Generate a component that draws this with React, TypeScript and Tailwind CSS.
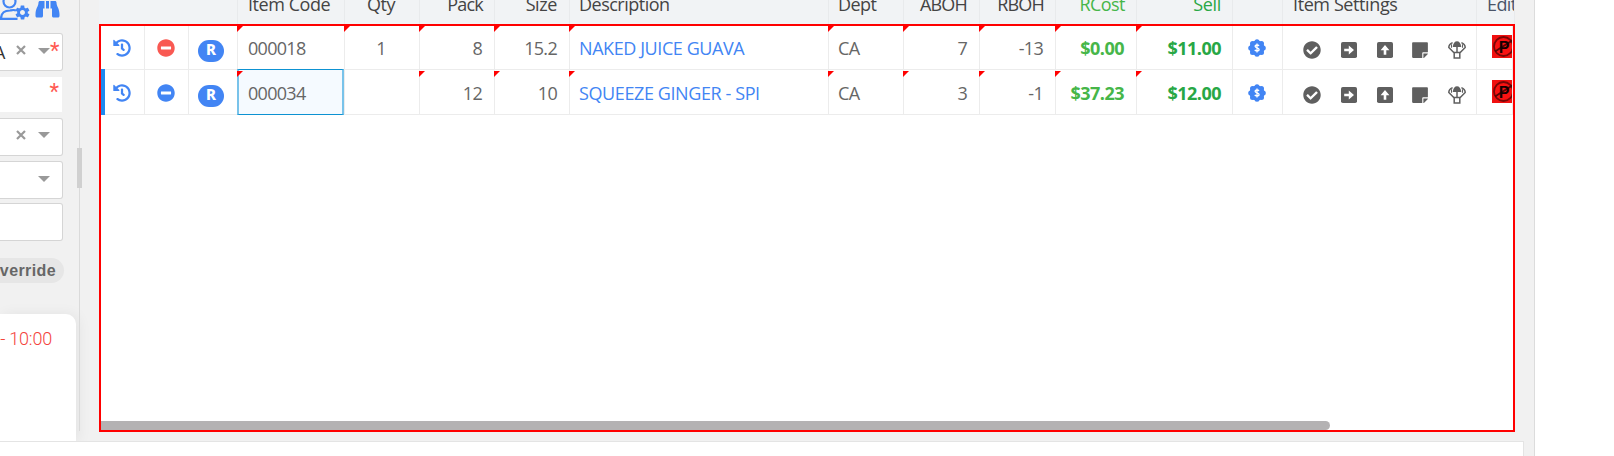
import React from "react";
import { FaHistory, FaMinusCircle, FaCheckCircle, FaStickyNote, FaBinoculars } from "react-icons/fa";
import { IoMdSettings } from "react-icons/io";

const GRID =
  "grid grid-cols-[44px_44px_49px_107px_75px_75px_75px_259px_75px_76px_76px_81px_96px_50px_194px_1fr]";

function UserGear() {
  return (
    <div className="relative h-7 w-[31px] shrink-0 text-[#4285f4]">
      <svg viewBox="0 0 31 28" className="h-7 w-[31px]" fill="none" stroke="currentColor" strokeWidth="2.2">
        <circle cx="9.5" cy="9.5" r="6" />
        <path d="M16 18.5c-2-1-3.500-.5-6 0-5 .2-9 1.500-9 8.300h16.500" />
      </svg>
      <IoMdSettings className="absolute top-[12px] left-[14px] size-[17px]" />
    </div>
  );
}

function DollarBadge() {
  return (
    <svg viewBox="0 0 18 18" className="size-[18px]">
      <g fill="#4285f4">
        <circle cx="9" cy="9" r="7.600" />
        <circle cx="9" cy="2.700" r="2.500" />
        <circle cx="13.500" cy="4.500" r="2.500" />
        <circle cx="15.300" cy="9" r="2.500" />
        <circle cx="13.500" cy="13.500" r="2.500" />
        <circle cx="9" cy="15.300" r="2.500" />
        <circle cx="4.500" cy="13.500" r="2.500" />
        <circle cx="2.700" cy="9" r="2.500" />
        <circle cx="4.500" cy="4.500" r="2.500" />
      </g>
      <path
        d="M11 6.900C10.600 6.300 10 6 9 6c-1.200 0-1.900.5-1.900 1.300 0 2.100 4 1.200 4 3.300 0 .9-.8 1.400-2.100 1.400-1.100 0-1.800-.3-2.200-1.100M9 4.600v8.800"
        fill="none"
        stroke="#fff"
        strokeWidth="1.300"
      />
    </svg>
  );
}

function ArrowSquare({ up = false }: { up?: boolean }) {
  return (
    <svg viewBox="0 0 16 16" className={up ? "size-4 -rotate-90" : "size-4"}>
      <rect width="16" height="16" rx="1.800" fill="currentColor" />
      <path d="M3.200 6.700h4.600V3.600L13 8l-5.200 4.400V9.300H3.200z" fill="#fff" />
    </svg>
  );
}

function Parachute() {
  return (
    <svg viewBox="0 0 18 18" className="size-[18px]" fill="none" stroke="currentColor">
      <path d="M4.700 6C5.200 2.200 6.800.3 9 .3s3.800 1.900 4.300 5.700z" fill="currentColor" stroke="none" />
      <path d="M4.600 1.600C2.200 2.700.8 4.500.8 6.500L6 11.800M13.400 1.600c2.400 1.100 3.800 2.900 3.800 4.900L12 11.800" strokeWidth="1.500" />
      <path d="M3.500 3.300v3.500M14.500 3.300v3.500" strokeWidth="1.100" />
      <path d="M9 6v5" strokeWidth="1.500" />
      <rect x="6.200" y="11.500" width="5.600" height="5.500" strokeWidth="1.500" />
    </svg>
  );
}

function NoParking() {
  return (
    <svg viewBox="0 0 23 23" className="size-[23px] shrink-0">
      <rect width="23" height="23" fill="#f01010" />
      <circle cx="11.500" cy="11.500" r="9.500" fill="#f81212" stroke="#7a0606" strokeWidth="1.800" />
      <path d="M3 16.500 21 5" stroke="#5a0404" strokeWidth="1.800" />
      <text x="6.800" y="17.500" fontFamily="Liberation Sans, sans-serif" fontWeight="700" fontSize="16" fill="#160000">
        P
      </text>
    </svg>
  );
}

type CellProps = { children?: React.ReactNode; mark?: boolean; className?: string };

function Cell({ children, mark, className = "" }: CellProps) {
  return (
    <div className={`relative flex min-w-0 items-center border-r border-b border-[#ececec] whitespace-nowrap ${className}`}>
      {mark && (
        <svg viewBox="0 0 6 6" className="absolute top-px -left-px size-1.5">
          <path d="M0 0h6L0 6z" fill="#f00" />
        </svg>
      )}
      {children}
    </div>
  );
}

type Row = {
  code: string; qty: string; pack: string; size: string; desc: string; aboh: string; rboh: string;
  cost: string; sell: string; active: boolean; descTracking: string;
};

const rows: Row[] = [
  { code: "000018", qty: "1", pack: "8", size: "15.2", desc: "NAKED JUICE GUAVA", aboh: "7", rboh: "-13", cost: "$0.00", sell: "$11.00", active: false, descTracking: "tracking-[-0.42px]" },
  { code: "000034", qty: "", pack: "12", size: "10", desc: "SQUEEZE GINGER - SPI", aboh: "3", rboh: "-1", cost: "$37.23", sell: "$12.00", active: true, descTracking: "tracking-[-0.4px]" },
];

function GridRow({ r }: { r: Row }) {
  return (
    <div className={`${GRID} relative h-[45px] shrink-0 text-[18px] tracking-[-0.7px] text-[#666]`}>
      {r.active && <div className="absolute -top-px bottom-0 left-0 z-10 w-1 bg-[#1e8af0]" />}
      <Cell className="pt-0.5 pl-3 text-[#4285f4]"><FaHistory size={18} /></Cell>
      <Cell className={r.active ? "pt-0.5 pl-3 text-[#4285f4]" : "pt-0.5 pl-3 text-[#f95952]"}><FaMinusCircle size={18} /></Cell>
      <Cell className="pt-2 pl-[9px]">
        <span className="flex h-[22px] w-[26px] items-center justify-center rounded-full bg-[#4285f4] pb-[3px] font-['Noto_Sans',sans-serif] text-[15px] leading-none font-extrabold tracking-normal text-white">R</span>
      </Cell>
      <Cell mark className="pt-0.5 pl-2.5">
        {r.active && <div className="absolute -top-px -bottom-px -left-px right-0 border-x-2 border-y border-x-[#79c3ea] border-y-[#0d92d2] bg-[#f5faff]" />}
        {r.active && (
          <svg viewBox="0 0 6 6" className="absolute top-px -left-px size-1.5"><path d="M0 0h6L0 6z" fill="#f00" /></svg>
        )}
        <span className="relative">{r.code}</span>
      </Cell>
      <Cell mark={!r.active} className="justify-center pt-0.5 pr-0.5">{r.qty}</Cell>
      <Cell mark className="justify-end pt-0.5 pr-3">{r.pack}</Cell>
      <Cell mark className="justify-end pt-0.5 pr-3">{r.size}</Cell>
      <Cell mark className={`pt-0.5 pl-[9px] text-[#4285f4] ${r.descTracking}`}>{r.desc}</Cell>
      <Cell mark className="pt-0.5 pl-[9px]">CA</Cell>
      <Cell mark className="justify-end pt-0.5 pr-3">{r.aboh}</Cell>
      <Cell mark className="justify-end pt-0.5 pr-3">{r.rboh}</Cell>
      <Cell mark className="justify-end pt-0.5 pr-3 font-bold tracking-[-0.5px] text-[#46b649]">{r.cost}</Cell>
      <Cell mark className="justify-end pt-0.5 pr-[11px] font-bold tracking-[-0.5px] text-[#28a745]">{r.sell}</Cell>
      <Cell className="pt-0.5 pl-[15px]"><DollarBadge /></Cell>
      <Cell className="pt-1.5 pl-5 text-[#5f5f5f]">
        <FaCheckCircle size={18} className="shrink-0" />
        <span className="ml-5"><ArrowSquare /></span>
        <span className="ml-5"><ArrowSquare up /></span>
        <FaStickyNote size={18} className="ml-[18px] shrink-0" />
        <span className="ml-[19px]"><Parachute /></span>
      </Cell>
      <Cell className="items-start overflow-hidden pt-2.5 pl-[15px]"><NoParking /></Cell>
    </div>
  );
}

const headers: { t: string; c: string }[] = [
  { t: "", c: "border-transparent" }, { t: "", c: "border-transparent" }, { t: "", c: "" },
  { t: "Item Code", c: "pl-2.5 tracking-[-0.45px]" },
  { t: "Qty", c: "justify-center pr-0.5 tracking-[-0.4px]" },
  { t: "Pack", c: "justify-end pr-[11px] tracking-[-0.8px]" },
  { t: "Size", c: "justify-end pr-3 tracking-[-0.4px]" },
  { t: "Description", c: "pl-[9px] tracking-[-0.5px]" },
  { t: "Dept", c: "pl-[9px] tracking-[-0.6px]" },
  { t: "ABOH", c: "justify-end pr-3 tracking-[-0.8px]" },
  { t: "RBOH", c: "justify-end pr-[11px] tracking-[-0.8px]" },
  { t: "RCost", c: "justify-end pr-[11px] text-[#46b649] tracking-[-0.55px]" },
  { t: "Sell", c: "justify-end pr-[11px] text-[#28a745] tracking-[-0.3px]" },
  { t: "", c: "" },
  { t: "Item Settings", c: "pl-2.5 tracking-[-0.4px]" },
  { t: "Edit", c: "pl-2.5 text-[#4a5568] tracking-[-0.6px]" },
];

function Caret() {
  return <svg viewBox="0 0 12 6" className="h-1.5 w-3"><path d="M0 0h12L6 6z" fill="#999" /></svg>;
}
function Clear() {
  return <svg viewBox="0 0 10 10" className="size-2.5"><path d="M1 1l8 8M9 1 1 9" stroke="#999" strokeWidth="2.200" /></svg>;
}
function Star() {
  return <span className="font-['Roboto',sans-serif] text-[22px] leading-none text-[#ff5a52]">*</span>;
}

const field = "flex h-[38px] w-[63px] shrink-0 items-center rounded-r-[3px] border border-b-[1.5px] border-l-0 border-[#d5d5d5] bg-white";

export default function App() {
  return (
    <div className="flex h-[456px] w-[1614px] overflow-hidden bg-white font-['Open_Sans',sans-serif]">
      <div className="flex w-[1535px] shrink-0 flex-col border-r border-[#dcdcdc] bg-[#f1f1f1]">
        <div className="flex h-[441px] shrink-0">
          <aside className="flex w-[77px] shrink-0 flex-col">
            <div className="-mt-2 flex h-[41px] shrink-0 items-start overflow-hidden">
              <UserGear />
              <FaBinoculars className="mt-[3px] ml-1 h-[24px] w-[25px] text-[#4285f4]" />
            </div>
            <div className={`${field} relative`}>
              <span className="-ml-[6px] w-[11px] text-[18px] text-[#333]">A</span>
              <span className="ml-[11px] -mt-1"><Clear /></span>
              <span className="ml-3 -mt-0.5"><Caret /></span>
              <span className="absolute top-[6px] left-[50px]"><Star /></span>
            </div>
            <div className="mt-1.5 flex h-[35px] w-[62px] shrink-0 justify-end bg-white pt-1 pr-[3px]"><Star /></div>
            <div className={`${field} mt-1.5`}>
              <span className="ml-4 -mt-1"><Clear /></span>
              <span className="ml-3 -mt-1"><Caret /></span>
            </div>
            <div className={`${field} mt-[5px]`}><span className="ml-[38px] -mt-0.5"><Caret /></span></div>
            <div className={`${field} mt-1`} />
            <div className="mt-[17px] flex h-[25px] w-[64px] shrink-0 items-center justify-end rounded-r-full bg-[#e6e6e6] pr-2 font-['Liberation_Sans',sans-serif] text-[16px] font-bold tracking-[0.4px] whitespace-nowrap text-[#666]">Override</div>
            <div className="mt-[31px] flex w-[76px] grow justify-end rounded-tr-[10px] bg-white pt-[11px] pr-6 font-['Roboto',sans-serif] text-[18px] font-light tracking-[-0.2px] whitespace-nowrap text-[#f4433c] shadow-[3px_0_14px_rgba(0,0,0,0.06)]">- 10:00</div>
          </aside>
          <div className="flex h-[431px] w-[22px] shrink-0 flex-col items-start">
            <div className="ml-[2px] h-[148px] w-px bg-[#dadada]" />
            <div className="h-10 w-[5px] bg-[#d0d0d0]" />
            <div className="ml-[2px] w-px grow bg-[#dadada]" />
          </div>
          <main className="flex w-[1416px] shrink-0 flex-col">
            <div className={`${GRID} h-6 shrink-0 overflow-hidden bg-[#f1f3f5] pl-0.5 text-[18px] text-[#444]`}>
              {headers.map((h, i) => (
                <div key={i} className={`flex min-w-0 overflow-hidden border-r border-[#e8eaec] whitespace-nowrap ${h.c}`}>
                  <span className="-mt-2 leading-[25px]">{h.t}</span>
                </div>
              ))}
            </div>
            <div className="flex h-[408px] flex-col overflow-hidden border-2 border-[#f00] bg-white">
              <div className="-mt-px flex flex-col">
                {rows.map((r) => <GridRow key={r.code} r={r} />)}
              </div>
              <div className="mt-auto h-[9px] w-[1229px] shrink-0 rounded-tl-[3px] rounded-r-full bg-[#b4b2b3]" />
            </div>
          </main>
        </div>
        <div className="w-[1524px] grow border-t border-r border-[#e4e4e4] bg-white" />
      </div>
    </div>
  );
}
